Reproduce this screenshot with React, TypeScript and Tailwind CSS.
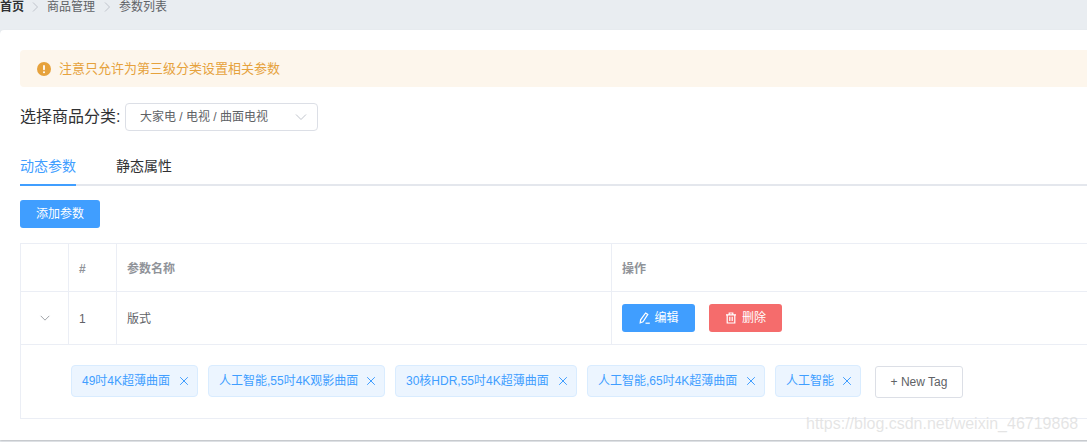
const font = "font-['Liberation_Sans','Noto_Sans_CJK_SC',sans-serif]";

const tags = [
  { label: "49吋4K超薄曲面", width: "w-[127px]" },
  { label: "人工智能,55吋4K观影曲面", width: "w-[177px]" },
  { label: "30核HDR,55吋4K超薄曲面", width: "w-[182px]" },
  { label: "人工智能,65吋4K超薄曲面", width: "w-[178px]" },
  { label: "人工智能", width: "w-[86px]" },
];

function Separator({ className }: { className: string }) {
  return (
    <svg viewBox="0 0 12 12" className={`${className} mt-px h-3 w-3 text-[#c0c4cc]`} fill="none" stroke="currentColor" strokeWidth="1">
      <path d="M4 1.5 8.5 6 4 10.5" />
    </svg>
  );
}

function Chevron({ className }: { className: string }) {
  return (
    <svg viewBox="0 0 14 14" className={className} fill="none" stroke="currentColor" strokeWidth="1">
      <path d="M2 4.5 7 9.5 12 4.5" />
    </svg>
  );
}

function WarningIcon() {
  return (
    <svg viewBox="0 0 14 14" className="h-[14px] w-[14px] text-[#e6a23c]">
      <circle cx="7" cy="7" r="7" fill="currentColor" />
      <rect x="6.1" y="3" width="1.8" height="5.2" rx="0.9" fill="#fff" />
      <circle cx="7" cy="10.2" r="1" fill="#fff" />
    </svg>
  );
}

function EditIcon() {
  return (
    <svg viewBox="0 0 12 12" className="h-3 w-3" fill="none" stroke="currentColor" strokeWidth="1.2">
      <path d="M7.6 1 9.8 2.4 5 9.8 2.2 10.8 2.6 7.8Z" />
      <path d="M7.5 11.2H11.8" />
    </svg>
  );
}

function DeleteIcon() {
  return (
    <svg viewBox="0 0 12 12" className="h-3 w-3" fill="none" stroke="currentColor" strokeWidth="1.2">
      <path d="M1 2.8H11M4.2 2.8V1H7.8V2.8M2.2 2.8V11H9.8V2.8M4.8 4.8V9M7.2 4.8V9" />
    </svg>
  );
}

function CloseIcon() {
  return (
    <svg viewBox="0 0 10 10" className="h-[10px] w-[10px] shrink-0" fill="none" stroke="currentColor" strokeWidth="1">
      <path d="M1.2 1.2 8.8 8.8M8.8 1.2 1.2 8.8" />
    </svg>
  );
}

export default function App() {
  return (
    <div className={`${font} relative h-[442px] w-full overflow-hidden bg-[#e9edf1]`}>
      {/* breadcrumb */}
      <div className="flex h-[30px] items-start text-xs leading-[15px] text-[#606266]">
        <span className="w-6 font-bold text-[#303133]">首页</span>
        <Separator className="mr-[6px] ml-[5px]" />
        <span>商品管理</span>
        <Separator className="mx-[6px]" />
        <span>参数列表</span>
      </div>

      <div className="h-[410px] w-[1120px] rounded-tl bg-white p-5 shadow-[0_1px_2px_rgba(0,0,0,0.2)]">
        <div className="flex h-[37px] items-center rounded bg-[#fdf6ec] px-[17px] text-[13px] text-[#e6a23c]">
          <WarningIcon />
          <span className="ml-2">注意只允许为第三级分类设置相关参数</span>
        </div>

        <div className="mt-4 flex items-center">
          <span className="w-[105px] text-base text-[#303133]">选择商品分类:</span>
          <div className="flex h-7 w-[193px] items-center justify-between rounded border border-[#dcdfe6] pr-[9px] pl-[14px] text-xs text-[#606266]">
            <span>大家电 / 电视 / 曲面电视</span>
            <Chevron className="h-[14px] w-[14px] text-[#c0c4cc]" />
          </div>
        </div>

        <div className="mt-[14px] flex h-[41px] gap-10 border-b-2 border-[#e4e7ed] text-sm text-[#303133]">
          <div className="-mb-[2px] border-b-2 border-[#409eff] pt-[11px] text-[#409eff]">动态参数</div>
          <div className="pt-[11px]">静态属性</div>
        </div>

        <button className="mt-[14px] block h-7 w-20 rounded-[3px] bg-[#409eff] text-xs text-white">添加参数</button>

        <table className="mt-[15px] w-full table-fixed border-collapse text-xs text-[#606266]">
          <colgroup>
            <col className="w-12" />
            <col className="w-12" />
            <col className="w-[495px]" />
            <col />
          </colgroup>
          <thead>
            <tr className="h-12 font-bold text-[#909399]">
              <th className="border border-[#ebeef5]"></th>
              <th className="border border-[#ebeef5] pt-[2px] pl-[10px] text-left">#</th>
              <th className="border border-[#ebeef5] pt-[2px] pl-[10px] text-left">参数名称</th>
              <th className="border border-[#ebeef5] pt-[2px] pl-[10px] text-left">操作</th>
            </tr>
          </thead>
          <tbody>
            <tr className="h-[53px]">
              <td className="border border-[#ebeef5]">
                <Chevron className="mx-auto h-3 w-3 text-[#909399]" />
              </td>
              <td className="border border-[#ebeef5] pt-[2px] pl-[10px]">1</td>
              <td className="border border-[#ebeef5] pt-[2px] pl-[10px]">版式</td>
              <td className="border border-[#ebeef5] pl-[10px]">
                <div className="flex gap-[14px]">
                  <button className="flex h-7 w-[73px] items-center justify-center gap-1 rounded-[3px] bg-[#409eff] text-white">
                    <EditIcon />
                    编辑
                  </button>
                  <button className="flex h-7 w-[73px] items-center justify-center gap-[5px] rounded-[3px] bg-[#f56c6c] text-white">
                    <DeleteIcon />
                    删除
                  </button>
                </div>
              </td>
            </tr>
            <tr className="h-[74px]">
              <td colSpan={4} className="border border-[#ebeef5] pb-px pl-[50px]">
                <div className="flex items-center gap-[10px]">
                  {tags.map((tag) => (
                    <span
                      key={tag.label}
                      className={`flex h-8 ${tag.width} items-center justify-between rounded border border-[#d9ecff] bg-[#ecf5ff] pr-2 pl-[10px] whitespace-nowrap text-[#409eff]`}
                    >
                      {tag.label}
                      <CloseIcon />
                    </span>
                  ))}
                  <button className="mt-[2px] ml-1 h-8 w-[88px] rounded-[3px] border border-[#dcdfe6] text-xs text-[#606266]">
                    + New Tag
                  </button>
                </div>
              </td>
            </tr>
          </tbody>
        </table>
      </div>

      {/* watermark */}
      <span className="absolute top-[415px] left-[806px] text-base leading-[18px] text-[#d9d9d9]/70">
        https://blog.csdn.net/weixin_46719868
      </span>
    </div>
  );
}
